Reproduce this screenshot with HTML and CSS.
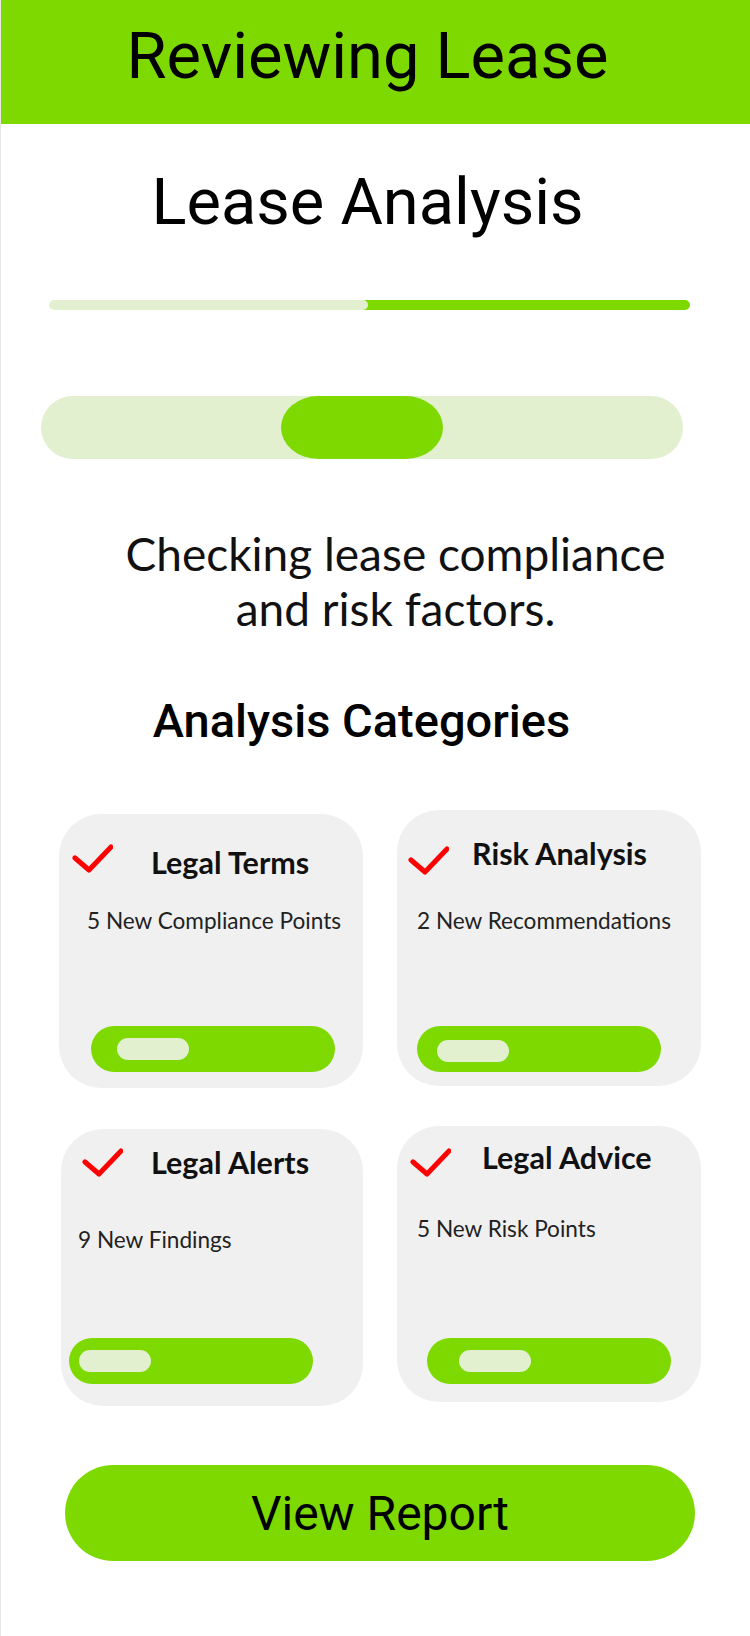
FILE: index.html
```html
<!DOCTYPE html>
<html lang="en">
<head>
<meta charset="utf-8">
<title>Reviewing Lease</title>
<link rel="stylesheet" href="styles.css">
</head>
<body>
<div class="app">
  <header class="topbar">
    <h1 class="topbar-title">Reviewing Lease</h1>
  </header>

  <main class="content">
    <h2 class="page-title">Lease Analysis</h2>

    <div class="progress">
      <div class="progress-done"></div>
      <div class="progress-rest"></div>
    </div>

    <div class="slider">
      <div class="slider-knob"></div>
    </div>

    <p class="description">Checking lease compliance<br>and risk factors.</p>

    <h3 class="section-title">Analysis Categories</h3>

    <section class="cards">
      <article class="card card--terms">
        <div class="card-head">
          <svg class="check" viewBox="0 0 41 30" aria-hidden="true"><polyline points="3,15 17,27 39,4"/></svg>
          <h4 class="card-title">Legal Terms</h4>
        </div>
        <p class="card-sub">5 New Compliance Points</p>
        <div class="card-bar"><span class="card-bar-pill"></span></div>
      </article>

      <article class="card card--risk">
        <div class="card-head">
          <svg class="check" viewBox="0 0 41 30" aria-hidden="true"><polyline points="3,15 17,27 39,4"/></svg>
          <h4 class="card-title">Risk Analysis</h4>
        </div>
        <p class="card-sub">2 New Recommendations</p>
        <div class="card-bar"><span class="card-bar-pill"></span></div>
      </article>

      <article class="card card--alerts">
        <div class="card-head">
          <svg class="check" viewBox="0 0 41 30" aria-hidden="true"><polyline points="3,15 17,27 39,4"/></svg>
          <h4 class="card-title">Legal Alerts</h4>
        </div>
        <p class="card-sub">9 New Findings</p>
        <div class="card-bar"><span class="card-bar-pill"></span></div>
      </article>

      <article class="card card--advice">
        <div class="card-head">
          <svg class="check" viewBox="0 0 41 30" aria-hidden="true"><polyline points="3,15 17,27 39,4"/></svg>
          <h4 class="card-title">Legal Advice</h4>
        </div>
        <p class="card-sub">5 New Risk Points</p>
        <div class="card-bar"><span class="card-bar-pill"></span></div>
      </article>
    </section>

    <button class="report-btn" type="button">View Report</button>
  </main>
</div>
</body>
</html>
```

FILE: styles.css
```css
* {
  box-sizing: border-box;
}

html, body {
  margin: 0;
  padding: 0;
  background: #ffffff;
}

body {
  width: 750px;
  font-family: Roboto, "Liberation Sans", sans-serif;
  color: #000;
}

.app {
  min-height: 1636px;
  border-left: 1px solid #e6e6e6;
}

/* Top bar */
.topbar {
  height: 124px;
  background: #7ed900;
  padding: 24px 16px 0 0;
}

.topbar-title {
  margin: 0;
  font-family: Roboto, sans-serif;
  font-weight: 400;
  font-size: 65px;
  line-height: 65px;
  text-align: center;
  color: #000;
}

/* Main content */
.content {
  display: flex;
  flex-direction: column;
}

.page-title {
  margin: 46px 0 0;
  padding-right: 16px;
  font-family: Roboto, sans-serif;
  font-weight: 400;
  font-size: 65px;
  line-height: 65px;
  text-align: center;
  color: #000;
}

.progress {
  display: flex;
  margin: 65px 0 0 48px;
  width: 641px;
  height: 10px;
  border-radius: 5px;
  overflow: hidden;
}

.progress-done {
  width: 319px;
  background: #e2f0d0;
  border-radius: 5px;
  position: relative;
  z-index: 1;
}

.progress-rest {
  flex: 1;
  background: #7ed900;
  margin-left: -6px;
}

.slider {
  display: flex;
  margin: 86px 0 0 40px;
  width: 642px;
  height: 63px;
  border-radius: 32px;
  background: #e2f0d0;
  padding-left: 240px;
}

.slider-knob {
  width: 162px;
  height: 63px;
  border-radius: 38px / 32px;
  background: #7ed900;
}

.description {
  margin: 67px 0 0;
  padding-left: 40px;
  font-family: Lato, "Open Sans", sans-serif;
  font-weight: 400;
  font-size: 46px;
  line-height: 55px;
  text-align: center;
  color: #111;
}

.section-title {
  margin: 61px 0 0;
  padding-right: 28px;
  font-family: Roboto, sans-serif;
  font-weight: 500;
  font-size: 47px;
  line-height: 47px;
  text-align: center;
  color: #000;
}

/* Cards */
.cards {
  display: grid;
  grid-template-columns: 304px 304px;
  column-gap: 34px;
  row-gap: 38px;
  margin: 66px 0 0 58px;
  align-items: start;
}

.card {
  display: flex;
  flex-direction: column;
  background: #f0f0f0;
  border-radius: 42px;
  height: var(--h);
  margin-top: var(--mt, 0);
  margin-left: var(--ml, 0);
}

.card-head {
  display: flex;
  align-items: flex-start;
}

.check {
  flex: none;
  width: 41px;
  height: 30px;
  margin: var(--ck-y) 0 0 var(--ck-x);
  fill: none;
  stroke: #ff0000;
  stroke-width: 5;
  stroke-linecap: round;
  stroke-linejoin: round;
}

.card-title {
  margin: var(--tt-y) 0 0 var(--tt-x);
  font-family: Lato, "Open Sans", sans-serif;
  font-weight: 700;
  font-size: 30.5px;
  line-height: 30px;
  color: #111;
  white-space: nowrap;
}

.card-sub {
  margin: var(--sb-y) 0 0 var(--sb-x);
  font-family: Lato, "Open Sans", sans-serif;
  font-weight: 400;
  font-size: 22.6px;
  line-height: 22px;
  color: #222;
  white-space: nowrap;
}

.card-bar {
  display: flex;
  align-items: flex-start;
  width: 244px;
  height: 46px;
  margin: auto 0 var(--bar-b) var(--bar-x);
  padding: var(--pill-y) 0 0 var(--pill-x);
  border-radius: 23px;
  background: #7ed900;
}

.card-bar-pill {
  width: 72px;
  height: 22px;
  border-radius: 11px;
  background: #e2f0d0;
}

.card--terms {
  --h: 274px; --mt: 4px;
  --ck-x: 13px; --ck-y: 29px;
  --tt-x: 38px; --tt-y: 33px;
  --sb-x: 28px; --sb-y: 33px;
  --bar-x: 32px; --bar-b: 16px;
  --pill-x: 26px; --pill-y: 12px;
}

.card--risk {
  --h: 276px;
  --ck-x: 11px; --ck-y: 35px;
  --tt-x: 23px; --tt-y: 28px;
  --sb-x: 20px; --sb-y: 35px;
  --bar-x: 20px; --bar-b: 14px;
  --pill-x: 20px; --pill-y: 14px;
}

.card--alerts {
  --h: 277px; --mt: 3px; --ml: 2px;
  --ck-x: 21px; --ck-y: 18px;
  --tt-x: 28px; --tt-y: 18px;
  --sb-x: 17px; --sb-y: 52px;
  --bar-x: 8px; --bar-b: 22px;
  --pill-x: 10px; --pill-y: 12px;
}

.card--advice {
  --h: 276px;
  --ck-x: 13px; --ck-y: 21px;
  --tt-x: 31px; --tt-y: 16px;
  --sb-x: 20px; --sb-y: 41px;
  --bar-x: 30px; --bar-b: 18px;
  --pill-x: 32px; --pill-y: 12px;
}

/* Button */
.report-btn {
  display: block;
  margin: 59px 0 0 64px;
  width: 630px;
  height: 96px;
  border: none;
  border-radius: 48px;
  background: #7ed900;
  font-family: Roboto, sans-serif;
  font-weight: 400;
  font-size: 48px;
  color: #000;
  padding: 0;
  cursor: pointer;
}
```
